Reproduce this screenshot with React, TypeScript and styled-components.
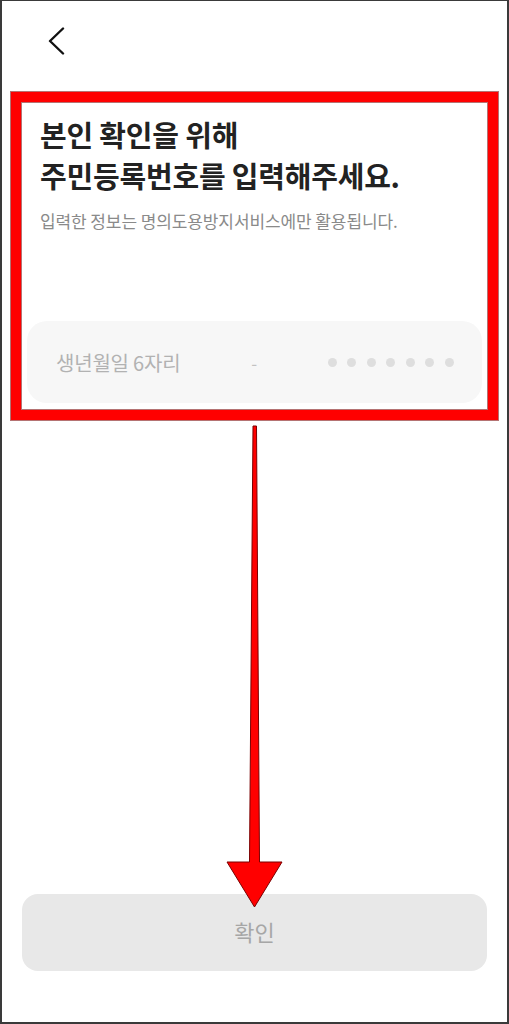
import React from 'react';
import styled, { createGlobalStyle } from 'styled-components';

const GlobalStyle = createGlobalStyle`
    html, body {
        margin: 0;
        padding: 0;
        background: #ffffff;
    }

    body {
        font-family: 'Noto Sans CJK KR', 'Noto Sans', sans-serif;
        color: #222222;
    }
`;

const Frame = styled.div`
    position: relative;
    box-sizing: border-box;
    width: 509px;
    height: 1024px;
    display: flex;
    flex-direction: column;
    background: #ffffff;
    border: 2px solid #3a3a3a;
    border-top-width: 1px;
    overflow: hidden;
`;

const Header = styled.header`
    height: 80px;
    display: flex;
    align-items: center;
    padding-left: 43px;
`;

const BackButton = styled.button`
    width: 22px;
    height: 30px;
    padding: 0;
    border: none;
    background: none;
    display: flex;
    align-items: center;
    justify-content: center;
    cursor: pointer;
`;

const Body = styled.main`
    position: relative;
    flex: 1;
    display: flex;
    flex-direction: column;
`;

const Intro = styled.section`
    padding: 33px 38px 0;
`;

const Title = styled.h1`
    margin: 0;
    font-size: 29px;
    line-height: 41px;
    font-weight: 700;
    letter-spacing: -0.2px;
    color: #222222;
`;

const Description = styled.p`
    margin: 13px 0 0;
    font-size: 17px;
    line-height: 24px;
    letter-spacing: -0.1px;
    color: #8a8a8a;
`;

const IdField = styled.div`
    margin: 88px 25px 0;
    height: 82px;
    box-sizing: border-box;
    padding: 0 28px 0 29px;
    border-radius: 20px;
    background: #f7f7f7;
    display: flex;
    align-items: center;
    justify-content: space-between;
`;

const Placeholder = styled.span`
    font-size: 20px;
    letter-spacing: -0.2px;
    color: #b2b2b2;
`;

const Dash = styled.span`
    font-size: 17px;
    color: #c2c2c2;
`;

const Dots = styled.div`
    display: flex;
    gap: 10.5px;
`;

const Dot = styled.span`
    width: 9px;
    height: 9px;
    border-radius: 50%;
    background: #dedede;
`;

const Footer = styled.footer`
    padding: 0 20px 51px;
`;

const ConfirmButton = styled.button`
    width: 100%;
    height: 77px;
    padding: 0 0 4px;
    border: none;
    border-radius: 16px;
    background: #e8e8e8;
    font-family: 'Noto Sans CJK KR', 'Noto Sans', sans-serif;
    font-size: 22px;
    font-weight: 400;
    color: #a6a6a6;
`;

const Highlight = styled.div`
    position: absolute;
    left: 9px;
    top: 91px;
    width: 487px;
    height: 328px;
    box-sizing: border-box;
    border: 10px solid #ff0000;
    box-shadow: 0 0 0 1px rgba(120, 0, 0, 0.55), inset 0 0 0 1px rgba(120, 0, 0, 0.55);
    pointer-events: none;
`;

const ArrowLayer = styled.svg`
    position: absolute;
    left: -2px;
    top: -1px;
    width: 509px;
    height: 1024px;
    pointer-events: none;
`;

export default function App() {
    return (
        <>
            <GlobalStyle />
            <Frame>
                <Header>
                    <BackButton aria-label="뒤로">
                        <svg width="18" height="28" viewBox="0 0 18 28" fill="none">
                            <path
                                d="M16 1.5 L3 14 L16 26.5"
                                stroke="#111111"
                                strokeWidth="2.4"
                                strokeLinecap="round"
                                strokeLinejoin="round"
                            />
                        </svg>
                    </BackButton>
                </Header>
                <Body>
                    <Intro>
                        <Title>
                            본인 확인을 위해
                            <br />
                            주민등록번호를 입력해주세요.
                        </Title>
                        <Description>입력한 정보는 명의도용방지서비스에만 활용됩니다.</Description>
                    </Intro>
                    <IdField>
                        <Placeholder>생년월일 6자리</Placeholder>
                        <Dash>-</Dash>
                        <Dots>
                            {Array.from({ length: 7 }).map((_, i) => (
                                <Dot key={i} />
                            ))}
                        </Dots>
                    </IdField>
                </Body>
                <Footer>
                    <ConfirmButton>확인</ConfirmButton>
                </Footer>
                <Highlight />
                <ArrowLayer viewBox="0 0 509 1024">
                    <path
                        d="M253 426 L256.5 426 L259.5 862 L282 862 L254.5 907 L227 862 L249.5 862 Z"
                        fill="#ff0000"
                        stroke="#7a0000"
                        strokeWidth="1"
                        strokeLinejoin="miter"
                    />
                </ArrowLayer>
            </Frame>
        </>
    );
}
